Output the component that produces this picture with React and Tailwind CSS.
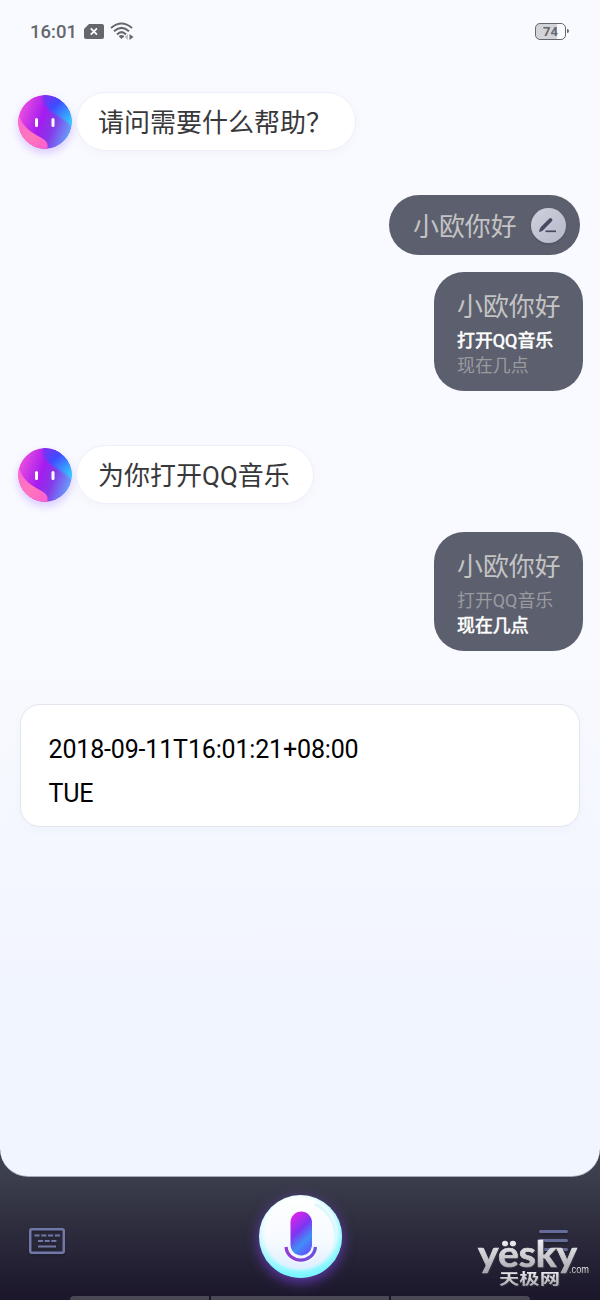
import { useId } from 'react'

function StatusBar() {
  return (
    <header className="flex h-[62px] items-center justify-between pl-[30px] pr-[31px] text-[#65676c]">
      <div className="flex items-center">
        <span className="w-[54px] pt-px text-[18.5px] leading-5 font-medium">16:01</span>
        <svg width="20" height="15" viewBox="0 0 20 15" aria-hidden="true">
          <path d="M5 0H18Q20 0 20 2V13Q20 15 18 15H2Q0 15 0 13V5Z" fill="#65676c" />
          <path d="M6.8 4.3L13 10.7M13 4.3L6.8 10.7" stroke="#fafaff" strokeWidth="1.8" />
        </svg>
        <svg className="ml-1.5" width="25" height="19" viewBox="0 0 25 19" fill="none" aria-hidden="true">
          <path d="M1 6Q11.5-3 22 6M4 9.3Q11.5 2.5 19 9.3M7 12.4Q11.5 8 16 12.4" stroke="#65676c" strokeWidth="2.1" />
          <path d="M8.6 14.2Q11.5 11.6 14.4 14.2L11.5 17Z" fill="#65676c" />
          <path d="M18 12V18L14.5 15Z" fill="#c1c2c8" />
          <path d="M19.5 12V18L23.5 15Z" fill="#65676c" />
        </svg>
      </div>
      <div className="flex items-center">
        <div className="flex h-[17px] w-[31px] items-center justify-center rounded-[5px] border border-[#65676c] bg-linear-to-r from-[#d3d4d9] from-74% to-[#fafaff] to-74% text-[13px] leading-none font-bold">
          74
        </div>
        <div className="ml-px h-1 w-[2px] rounded-r bg-[#65676c]" />
      </div>
    </header>
  )
}

function Avatar() {
  const id = useId()
  return (
    <svg
      className="shrink-0 rounded-full shadow-[0_4px_9px_#9661ff50]"
      width="54"
      height="54"
      viewBox="0 0 54 54"
      aria-hidden="true"
    >
      <defs>
        <clipPath id={`${id}c`}><circle cx="27" cy="27" r="27" /></clipPath>
        <filter id={`${id}f`}><feGaussianBlur stdDeviation="1.3" /></filter>
        <linearGradient id={`${id}a`} x1="0" y1=".3" x2="1" y2=".65">
          <stop stopColor="#f051df" />
          <stop offset=".43" stopColor="#a51cef" />
          <stop offset=".66" stopColor="#8539e8" />
          <stop offset="1" stopColor="#64a5fb" />
        </linearGradient>
        <linearGradient id={`${id}b`} gradientUnits="userSpaceOnUse" x1="26" y1="2" x2="54" y2="30">
          <stop stopColor="#7a31f4" />
          <stop offset=".35" stopColor="#3f4cff" />
          <stop offset="1" stopColor="#32dcff" />
        </linearGradient>
        <linearGradient id={`${id}p`} x1="0" y1="0" x2="1" y2="1">
          <stop stopColor="#fb67d4" />
          <stop offset=".55" stopColor="#ff76bb" />
          <stop offset="1" stopColor="#ff5cd0" />
        </linearGradient>
      </defs>
      <g clipPath={`url(#${id}c)`}>
        <path d="M0 0H54V54H0Z" fill={`url(#${id}a)`} />
        <path d="M25-6C22 12 34 17 43 23Q52 28 60 38V-6Z" fill={`url(#${id}b)`} filter={`url(#${id}f)`} />
        <path d="M0 17C3 30 11 36 20 41C28 45 31 48 29 54H0Z" fill={`url(#${id}p)`} />
        <rect x="17" y="23" width="3" height="9" rx="1.5" fill="white" />
        <rect x="33.5" y="23" width="3" height="9" rx="1.5" fill="white" />
      </g>
    </svg>
  )
}

function Reply({ children }) {
  return (
    <div className="flex h-[59px] items-center gap-[4px] pl-[18px]">
      <Avatar />
      <div className="flex h-[59px] items-center rounded-full border border-[#eeeffc] bg-white pt-[3px] pr-[23px] pl-[21px] text-[26px] text-[#38383a] shadow-[0_3px_8px_#7f83b00d]">
        <span className="whitespace-nowrap">{children}</span>
      </div>
    </div>
  )
}

function Choices({ active }) {
  return (
    <div className="mr-[17px] ml-auto flex h-[119px] w-[149px] flex-col rounded-[30px] bg-[#5c5f6e] pt-[15px] pl-[23px] whitespace-nowrap">
      <p className="text-[25.9px] leading-[40px] text-[#c3c3c3]">小欧你好</p>
      <div className="pt-[2px]">
        {['打开QQ音乐', '现在几点'].map((label, i) => (
          <p
            key={label}
            className={`text-[17.9px] leading-[24.5px] ${i === active ? 'text-white [-webkit-text-stroke:0.6px_white]' : 'text-[#9a9b9f]'}`}
          >
            {label}
          </p>
        ))}
      </div>
    </div>
  )
}

function MicButton() {
  return (
    <button
      aria-label="Voice"
      className="mr-[4px] flex h-[83px] w-[83px] items-center justify-center rounded-full bg-linear-to-b from-white via-[#e8fbff] to-[#80f8ff] shadow-[0_4px_14px_#7544d5cc,inset_-2px_-3px_6px_#76f4ff]"
    >
      <svg width="83" height="83" viewBox="0 0 83 83" fill="none" aria-hidden="true">
        <defs>
          <linearGradient id="mic" gradientUnits="userSpaceOnUse" x1="31" y1="22" x2="57" y2="50">
            <stop stopColor="#e022ea" />
            <stop offset=".42" stopColor="#7d35f2" />
            <stop offset=".72" stopColor="#418ef5" />
            <stop offset="1" stopColor="#5c5aff" />
          </linearGradient>
          <linearGradient id="micFace" x1="0" y1="0" x2="0" y2="1">
            <stop stopColor="#fff" />
            <stop offset=".6" stopColor="#f6faff" />
            <stop offset="1" stopColor="#dfeeff" />
          </linearGradient>
          <linearGradient id="micArc" x1="0" y1="0" x2="1" y2="0">
            <stop stopColor="#9737d6" />
            <stop offset="1" stopColor="#6753db" />
          </linearGradient>
          <filter id="micSoft"><feGaussianBlur stdDeviation="1.2" /></filter>
        </defs>
        <circle cx="41" cy="39" r="36" fill="url(#micFace)" filter="url(#micSoft)" />
        <path d="M56 9A36 36 0 0 1 75 52" stroke="#d8faff" strokeWidth="2.5" />
        <rect x="31.5" y="16.5" width="21.5" height="44" rx="10.75" fill="url(#mic)" />
        <path d="M28 52C30 69 54.5 69 56.5 52" stroke="#f1f6ff" strokeWidth="7" />
        <path d="M27 52C29 69.5 54.5 69.5 56.5 52" stroke="url(#micArc)" strokeWidth="3.2" />
      </svg>
    </button>
  )
}

function Watermark() {
  return (
    <svg className="absolute top-[57px] left-[474px] overflow-visible" width="122" height="62" viewBox="0 0 122 62">
      <defs>
        <linearGradient id="silver" x1="0" y1="0" x2="0" y2="1">
          <stop offset=".2" stopColor="#f0f0f3" />
          <stop offset="1" stopColor="#a1a1a8" />
        </linearGradient>
      </defs>
      <g fill="url(#silver)" className="drop-shadow-[1px_1px_0px_#302f3d]">
        <text x="4" y="33" textLength="99" lengthAdjust="spacingAndGlyphs" stroke="url(#silver)" strokeWidth=".7" className="font-['Lato'] text-[36px] font-bold">yësky</text>
        <text x="95" y="39" textLength="20" lengthAdjust="spacingAndGlyphs" className="font-['Liberation_Sans'] text-[10px]">.com</text>
        <text x="25" y="49.5" textLength="61" lengthAdjust="spacingAndGlyphs" className="font-['Noto_Sans_CJK_SC'] text-[15px] font-bold">天极网</text>
      </g>
    </svg>
  )
}

function Footer() {
  return (
    <footer className="relative flex h-[123px] flex-col justify-between">
      <div className="flex h-[119px] items-center justify-between pr-8 pl-[29px]">
        <svg width="36" height="27" viewBox="0 0 36 27" fill="none" stroke="#7178a7" aria-label="Keyboard" className="mt-[9px] drop-shadow-[0_2px_1px_#20202b]">
          <rect x="1.25" y="1.25" width="33.5" height="23.5" rx="1.5" strokeWidth="2.5" />
          <path d="M5.5 7.5H31" strokeWidth="2" strokeDasharray="5 1.8" />
          <path d="M9 13H27.5" strokeWidth="2" strokeDasharray="5 1.7" />
          <path d="M9 18.5H27" strokeWidth="2" />
        </svg>
        <MicButton />
        <div className="mt-[7px] flex w-[29px] flex-col gap-1.5 drop-shadow-[0_2px_1px_#20202b]">
          <span className="h-[3px] rounded bg-[#666c9a]" />
          <span className="h-[3px] rounded bg-[#666c9a]" />
          <span className="h-[3px] rounded bg-[#666c9a]" />
        </div>
      </div>
      <div className="mx-[70px] flex h-1 gap-[2px]">
        <span className="w-[139px] rounded-tl bg-[#4b4754]" />
        <span className="flex-1 bg-[#4b4754]" />
        <span className="w-[139px] rounded-tr bg-[#4b4754]" />
      </div>
      <Watermark />
    </footer>
  )
}

export default function App() {
  return (
    <div className="h-[1300px] w-[600px] overflow-hidden bg-linear-to-b from-[#3d404e] from-90% to-[#1b162a] font-['Roboto','Noto_Sans_CJK_SC',sans-serif]">
      <main className="flex h-[1177px] flex-col rounded-b-[28px] border-b border-[#a6a9b5] bg-linear-to-b from-[#f9faff] from-55% to-[#f1f5ff] to-85%">
        <StatusBar />
        <div className="mt-[30px]"><Reply>请问需要什么帮助？</Reply></div>
        <div className="mt-11 mr-5 ml-auto flex h-[60px] w-[191px] items-center justify-between rounded-full bg-[#5c5f6e] pr-3.5 pl-6">
          <span className="pt-1 text-[25.9px] text-[#c3c3c3]">小欧你好</span>
          <button aria-label="Edit" className="flex size-[35px] items-center justify-center rounded-full bg-linear-to-br from-[#d0d1dd] to-[#b5b8c9] shadow-sm">
            <svg className="mr-[3px]" width="19" height="18" viewBox="0 0 19 18" fill="none" stroke="#454a60" aria-hidden="true">
              <path d="M4.2 12.3L12.5 4" strokeWidth="3.8" strokeLinecap="round" />
              <path d="M1.6 15.4L2.4 12.5L4.4 14.5Z" fill="#454a60" />
              <path d="M7.5 15.3H18" strokeWidth="1.7" />
            </svg>
          </button>
        </div>
        <div className="mt-[17px] flex"><Choices active={0} /></div>
        <div className="mt-[54px]"><Reply>为你打开QQ音乐</Reply></div>
        <div className="mt-[28px] flex"><Choices active={1} /></div>
        <section className="mx-5 mt-[53px] h-[123px] rounded-[20px] border border-[#e3e6ec] bg-white pt-[23px] pl-[27.5px] text-[25px] leading-[44px] tracking-[-0.16px] text-black shadow-[0_4px_9px_#8394c00c]">
          <p>2018-09-11T16:01:21+08:00</p>
          <p>TUE</p>
        </section>
      </main>
      <Footer />
    </div>
  )
}
